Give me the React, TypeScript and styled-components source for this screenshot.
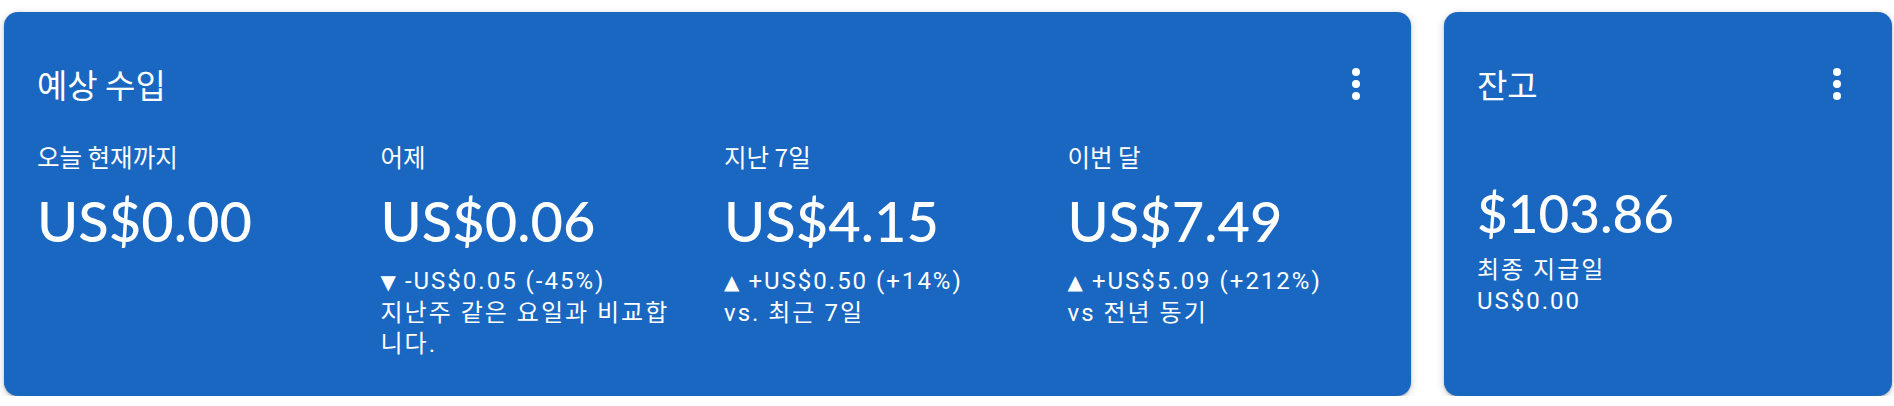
import React from "react";
import styled, { createGlobalStyle } from "styled-components";

const GlobalStyle = createGlobalStyle`
  html, body { margin: 0; padding: 0; background: #ffffff; }
  body {
    font-family: Roboto, "Noto Sans CJK KR", sans-serif;
    -webkit-font-smoothing: antialiased;
  }
  * { box-sizing: border-box; }
`;

const Page = styled.main`
  display: flex;
  gap: 33px;
  width: 1894px;
  padding: 12px 2px 0 4px;
`;

const Card = styled.section<{ $width: number }>`
  flex: 0 0 ${(p) => p.$width}px;
  height: 384px;
  display: flex;
  flex-direction: column;
  padding: 48px 0 0 33px;
  background: #1967c1;
  color: #ffffff;
  border-radius: 14px;
  box-shadow: 0 1px 2px rgba(60, 64, 67, 0.3), 0 2px 6px 2px rgba(60, 64, 67, 0.15);
`;

const Header = styled.header`
  display: flex;
  align-items: center;
  justify-content: space-between;
  height: 48px;
  padding-right: 31px;
`;

const Title = styled.h2`
  margin: 0;
  font-family: "Noto Sans CJK KR", sans-serif;
  font-weight: 400;
  font-size: 33px;
  line-height: 48px;
`;

const MenuButton = styled.button`
  display: flex;
  align-items: center;
  justify-content: center;
  width: 48px;
  height: 48px;
  padding: 0;
  border: 0;
  background: transparent;
  color: #ffffff;
`;

const Metrics = styled.div`
  display: grid;
  grid-template-columns: repeat(4, 1fr);
  margin-top: 33px;
`;

const Metric = styled.div`
  display: flex;
  flex-direction: column;
  padding-right: 44px;
`;

const Label = styled.div`
  font-family: "Noto Sans CJK KR", sans-serif;
  font-size: 24.5px;
  line-height: 32px;
`;

const Value = styled.div<{ $size: number; $gap: number }>`
  margin-top: ${(p) => p.$gap}px;
  font-family: Lato, Roboto, sans-serif;
  font-size: ${(p) => p.$size}px;
  line-height: 64px;
  font-weight: 500;
`;

const Note = styled.div<{ $gap: number }>`
  margin-top: ${(p) => p.$gap}px;
  font-family: Roboto, "Noto Sans CJK KR", sans-serif;
  font-size: 24px;
  line-height: 31px;
  letter-spacing: 2px;
`;

const Arrow = styled.span`
  font-family: "DejaVu Sans", sans-serif;
  font-size: 20px;
  letter-spacing: 0;
  margin-right: 9px;
`;

const MoreIcon = () => (
  <svg width="48" height="48" viewBox="0 0 24 24" fill="currentColor" aria-hidden="true">
    <circle cx="12" cy="6" r="2" />
    <circle cx="12" cy="12" r="2" />
    <circle cx="12" cy="18" r="2" />
  </svg>
);

type Item = {
  label: string;
  value: string;
  dir?: "up" | "down";
  change?: string;
  note?: string;
};

const items: Item[] = [
  { label: "오늘 현재까지", value: "US$0.00" },
  { label: "어제", value: "US$0.06", dir: "down", change: "-US$0.05 (-45%)", note: "지난주 같은 요일과 비교합니다." },
  { label: "지난 7일", value: "US$4.15", dir: "up", change: "+US$0.50 (+14%)", note: "vs. 최근 7일" },
  { label: "이번 달", value: "US$7.49", dir: "up", change: "+US$5.09 (+212%)", note: "vs 전년 동기" },
];

export default function App() {
  return (
    <>
      <GlobalStyle />
      <Page>
        <Card $width={1407}>
          <Header>
            <Title>예상 수입</Title>
            <MenuButton aria-label="더보기">
              <MoreIcon />
            </MenuButton>
          </Header>
          <Metrics>
            {items.map((it) => (
              <Metric key={it.label}>
                <Label>{it.label}</Label>
                <Value $size={56} $gap={16}>{it.value}</Value>
                {it.change && (
                  <Note $gap={13}>
                    <div>
                      <Arrow>{it.dir === "up" ? "▲" : "▼"}</Arrow>
                      {it.change}
                    </div>
                    <div>{it.note}</div>
                  </Note>
                )}
              </Metric>
            ))}
          </Metrics>
        </Card>
        <Card $width={448}>
          <Header>
            <Title>잔고</Title>
            <MenuButton aria-label="더보기">
              <MoreIcon />
            </MenuButton>
          </Header>
          <Value $size={53} $gap={73}>$103.86</Value>
          <Note $gap={10}>
            <div>최종 지급일</div>
            <div>US$0.00</div>
          </Note>
        </Card>
      </Page>
    </>
  );
}
